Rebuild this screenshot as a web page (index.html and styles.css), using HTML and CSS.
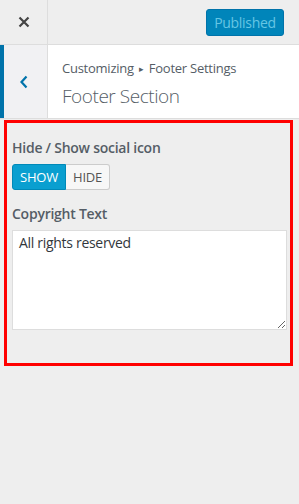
FILE: index.html
```html
<!DOCTYPE html>
<html>
<head>
<meta charset="utf-8">
<link rel="stylesheet" href="styles.css">
</head>
<body>
<div class="topbar">
  <div class="close">
    <svg width="12" height="12" viewBox="0 0 12 12"><path d="M1.5 1.5 L10.5 10.5 M10.5 1.5 L1.5 10.5" stroke="#444" stroke-width="2.2" fill="none"/></svg>
  </div>
  <div class="actions">
    <button class="publish">Published</button>
  </div>
</div>
<div class="section-head">
  <div class="back">
    <svg width="10" height="14" viewBox="0 0 10 14"><path d="M7.5 1.5 L2.5 7 L7.5 12.5" stroke="#0073aa" stroke-width="2.2" fill="none"/></svg>
  </div>
  <div class="titles">
    <div class="crumb">Customizing <span class="sep">&#9656;</span> Footer Settings</div>
    <div class="title">Footer Section</div>
  </div>
</div>
<div class="panel">
  <div class="outline">
    <div class="label">Hide / Show social icon</div>
    <div class="toggle">
      <span class="opt on">SHOW</span><span class="opt">HIDE</span>
    </div>
    <div class="label second">Copyright Text</div>
    <textarea class="copy">All rights reserved</textarea>
  </div>
</div>
</body>
</html>
```

FILE: styles.css
```css
* { box-sizing: border-box; }
html, body { margin: 0; padding: 0; }
body {
  width: 299px;
  height: 504px;
  background: #eeeeee;
  font-family: "Open Sans", "Noto Sans", sans-serif;
  color: #555d66;
  overflow: hidden;
  letter-spacing: -0.25px;
}
.topbar {
  display: flex;
  height: 45px;
  border-bottom: 1px solid #dddddd;
  background: #eeeeee;
}
.close {
  width: 48px;
  border-right: 1px solid #dddddd;
  display: flex;
  align-items: center;
  justify-content: center;
}
.actions {
  flex: 1;
  display: flex;
  justify-content: flex-end;
  align-items: flex-start;
  padding: 9px 15px 0 0;
}
.publish {
  width: 78px;
  height: 27px;
  background: #0085ba;
  border: 1px solid #0073aa;
  border-radius: 3px;
  color: #66c6e4;
  font-family: inherit;
  font-size: 14px;
  letter-spacing: -0.3px;
  padding: 0;
}
.section-head {
  display: flex;
  height: 74px;
  background: #ffffff;
  border-bottom: 1px solid #dddddd;
}
.back {
  width: 48px;
  background: #f1f1f3;
  border-left: 4px solid #0073aa;
  border-right: 1px solid #dddddd;
  display: flex;
  align-items: center;
  justify-content: center;
  padding-right: 4px;
}
.titles {
  padding: 13px 0 0 14px;
}
.crumb {
  font-size: 13px;
  line-height: 20px;
}
.sep { font-size: 9px; position: relative; top: -1px; margin: 0 2px; }
.title {
  font-size: 19px;
  font-weight: 300;
  line-height: 28px;
  margin-top: 2px;
  letter-spacing: -0.45px;
}
.panel {
  padding: 1px 6px 0 4px;
}
.outline {
  border: 3px solid #ff0000;
  height: 246px;
  padding: 15px 4px 0 5px;
}
.label {
  font-size: 14px;
  font-weight: 600;
  line-height: 20px;
}
.label.second { margin-top: 14px; }
.toggle {
  display: flex;
  margin-top: 6px;
}
.opt {
  width: 44px;
  height: 26px;
  display: flex;
  align-items: center;
  justify-content: center;
  font-size: 13px;
  background: #f7f7f7;
  border: 1px solid #cccccc;
  color: #555;
}
.opt + .opt { border-left: none; border-radius: 0 3px 3px 0; }
.opt.on {
  width: 54px;
  background: #0a9fd0;
  border-color: #0089b8;
  color: #fff;
  border-radius: 3px 0 0 3px;
}
.copy {
  display: block;
  margin-top: 6px;
  width: 275px;
  height: 100px;
  border: 1px solid #dddddd;
  background: #fff;
  font-family: inherit;
  font-size: 14px;
  line-height: 20px;
  letter-spacing: -0.3px;
  color: #32373c;
  padding: 2px 6px;
  resize: vertical;
}
```
